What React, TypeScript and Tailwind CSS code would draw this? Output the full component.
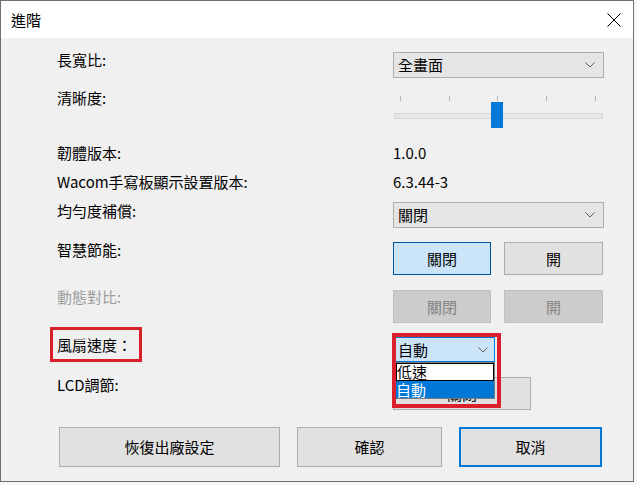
import React from 'react';

function Chevron() {
  return (
    <svg width="10" height="6" viewBox="0 0 10 6" className="shrink-0">
      <polyline points="0.5,0.5 5,5 9.5,0.5" fill="none" stroke="#5a5a5a" strokeWidth="1" />
    </svg>
  );
}

function Select({ value }: { value: string }) {
  return (
    <div className="w-[211px] h-[26px] border border-[#adadad] bg-[#e5e5e5] flex items-center justify-between pl-[4px] pr-[8px] leading-[20px]">
      <span>{value}</span>
      <Chevron />
    </div>
  );
}

function Button({ label, kind = 'normal', className = '' }: { label: string; kind?: 'normal' | 'selected' | 'disabled'; className?: string }) {
  const styles =
    kind === 'selected'
      ? 'bg-[#cce4f7] border-[#005499] text-black'
      : kind === 'disabled'
        ? 'bg-[#cccccc] border-[#bfbfbf] text-[#838383]'
        : 'bg-[#e1e1e1] border-[#adadad] text-black';
  return (
    <div className={`h-[33px] border flex items-center justify-center leading-[20px] ${styles} ${className}`}>
      {label}
    </div>
  );
}

function Slider() {
  const ticks = [7, 56, 104, 153, 202];
  return (
    <div className="relative w-[211px] h-[40px]">
      {ticks.map((x) => (
        <div key={x} className="absolute top-[8px] w-px h-[5px] bg-[#b5b5b5]" style={{ left: x }} />
      ))}
      <div className="absolute left-[1px] top-[25px] w-[209px] h-[6px] bg-[#e7e7e7] border border-[#d6d6d6]" />
      <div className="absolute left-[98px] top-[14px] w-[12px] h-[26px] bg-[#0078d7]" />
    </div>
  );
}

export default function App() {
  return (
    <div className="w-[637px] h-[485px] bg-[#f7f7f7] overflow-hidden font-['Noto_Sans_CJK_TC','Microsoft_JhengHei',sans-serif] text-[15px] text-black">
      <div className="w-[634px] h-[482px] border border-[#707070] bg-[#f0f0f0] flex flex-col">
        {/* title bar */}
        <div className="h-[37px] bg-white flex items-center justify-between pl-[10px] pr-[12px]">
          <span className="leading-[20px]">進階</span>
          <svg width="14" height="14" viewBox="0 0 14 14">
            <path d="M0.5 0.5 L13.5 13.5 M13.5 0.5 L0.5 13.5" stroke="#000" strokeWidth="1" fill="none" />
          </svg>
        </div>

        <div className="flex-1 flex flex-col pl-[56px] pt-[14px]">
          <div className="flex h-[26px]">
            <div className="w-[336px] leading-[20px] -mt-[2px]">長寬比:</div>
            <Select value="全畫面" />
          </div>

          <div className="flex h-[40px] mt-[10px]">
            <div className="w-[336px] leading-[20px]">清晰度:</div>
            <Slider />
          </div>

          <div className="flex h-[20px] mt-[15px] leading-[20px]">
            <div className="w-[336px]">韌體版本:</div>
            <div>1.0.0</div>
          </div>

          <div className="flex h-[20px] mt-[9px] leading-[20px]">
            <div className="w-[336px]">Wacom手寫板顯示設置版本:</div>
            <div>6.3.44-3</div>
          </div>

          <div className="flex h-[26px] mt-[10px]">
            <div className="w-[336px] leading-[20px] -mt-[1px]">均勻度補償:</div>
            <Select value="關閉" />
          </div>

          <div className="flex h-[33px] mt-[14px]">
            <div className="w-[336px] leading-[20px] -mt-[2px]">智慧節能:</div>
            <div className="flex gap-[13px]">
              <Button label="關閉" kind="selected" className="w-[98px]" />
              <Button label="開" className="w-[99px]" />
            </div>
          </div>

          <div className="flex h-[33px] mt-[15px]">
            <div className="w-[336px] leading-[20px] -mt-[3px] text-[#9d9d9d]">動態對比:</div>
            <div className="flex gap-[13px]">
              <Button label="關閉" kind="disabled" className="w-[98px]" />
              <Button label="開" kind="disabled" className="w-[99px]" />
            </div>
          </div>

          <div className="flex h-[35px] mt-[4px]">
            <div className="w-[343px] -ml-[7px]">
              <div className="w-[92px] h-[35px] border-[3px] border-[#dc1f2d] flex items-center pl-[4px] leading-[20px]">風扇速度：</div>
            </div>
            <div className="relative z-10 ml-[2px] mt-[10px] w-[100px] h-[25px] border border-[#0078d7] bg-[#cce4f7] flex items-center justify-between pl-[2px] pr-[6px] leading-[20px]">
              <span>自動</span>
              <Chevron />
              <div className="absolute left-[-1px] top-[24px] w-[100px] border border-[#7a7a7a] bg-white">
                <div className="h-[18px] border border-black bg-white leading-[16px]">低速</div>
                <div className="h-[17px] bg-[#0078d7] text-white leading-[17px]">自動</div>
              </div>
              <div className="absolute left-[-4px] top-[-5px] w-[109px] h-[75px] border-[4px] border-[#dc1f2d]" />
            </div>
          </div>

          <div className="flex h-[33px] mt-[15px]">
            <div className="w-[336px] leading-[20px] -mt-[2px]">LCD調節:</div>
            <Button label="關閉" className="w-[138px]" />
          </div>

          <div className="flex h-[40px] mt-[17px] ml-[2px] gap-[17px]">
            <Button label="恢復出廠設定" className="w-[221px] h-[40px]" />
            <Button label="確認" className="w-[145px] h-[40px]" />
            <div className="w-[143px] h-[40px] border-2 border-[#0078d7] bg-[#e1e1e1] flex items-center justify-center leading-[20px]">取消</div>
          </div>
        </div>
      </div>
    </div>
  );
}
